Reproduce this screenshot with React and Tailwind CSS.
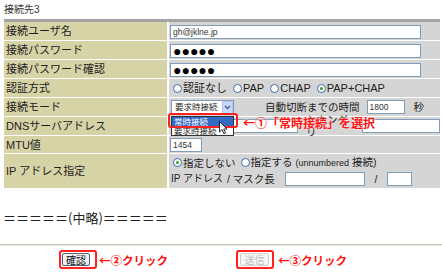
import React from "react";

function Row({ label, h, children }) {
  return (
    <div className={`flex gap-[2px] ${h}`}>
      <div className="w-[163px] shrink-0 bg-[#d6d3a7] flex items-center pl-[2px] text-[11px] leading-[12px] text-[#1e1e1e]">
        {label}
      </div>
      <div className="flex-1 bg-[#d5d5d5] flex items-center pl-px">{children}</div>
    </div>
  );
}

function Box({ className, children }) {
  return (
    <div
      className={`shrink-0 h-[14px] border border-[#7f9db9] bg-white flex items-center px-[2px] text-[8.5px] leading-[10px] text-[#333] ${className}`}
    >
      {children}
    </div>
  );
}

function Radio({ checked }) {
  return (
    <span className="inline-flex shrink-0 w-[9px] h-[9px] rounded-full border border-[#3b6aa8] bg-white items-center justify-center">
      {checked && <span className="w-[3px] h-[3px] rounded-full bg-[#29a329]" />}
    </span>
  );
}

function Opt({ checked, children }) {
  return (
    <span className="flex items-center gap-px">
      <Radio checked={checked} />
      <span>{children}</span>
    </span>
  );
}

export default function App() {
  return (
    <div className="relative w-[442px] h-[273px] overflow-hidden bg-white font-['Liberation_Sans','Noto_Sans_CJK_JP',sans-serif] text-[#1e1e1e]">
      <div className="h-[19px] pl-[4px] pt-[5px] text-[10px] leading-[10px] text-[#333]">接続先3</div>
      <div className="ml-[4px] w-[436px] h-[3px] bg-[#a3a3a3]" />
      <div className="ml-[4px] w-[436px] flex flex-col gap-px">
        <Row label="接続ユーザ名" h="h-[18px]">
          <Box className="w-[251px] mt-px">gh@jklne.jp</Box>
        </Row>
        <Row label="接続パスワード" h="h-[18px]">
          <Box className="w-[251px] mt-px">
            <span className="text-[14px] leading-[12px] text-black">●●●●●</span>
          </Box>
        </Row>
        <Row label="接続パスワード確認" h="h-[18px]">
          <Box className="w-[251px] mt-px">
            <span className="text-[14px] leading-[12px] text-black">●●●●●</span>
          </Box>
        </Row>
        <Row label="認証方式" h="h-[18px]">
          <div className="ml-[3px] flex items-center gap-[6px] text-[11px] leading-[12px] text-[#222]">
            <Opt>認証なし</Opt>
            <Opt>PAP</Opt>
            <Opt>CHAP</Opt>
            <Opt checked>PAP+CHAP</Opt>
          </div>
        </Row>
        <Row label="接続モード" h="h-[18px]">
          <div className="ml-px w-[63px] h-[15px] border border-[#7f9db9] bg-white flex items-center">
            <span className="flex-1 pl-[3px] text-[8.5px] leading-[10px] text-[#222]">要求時接続</span>
            <span className="w-[11px] h-[13px] bg-[#c6d6fc] border border-[#b3c6f2] rounded-[1px] flex items-center justify-center">
              <svg width="7" height="5" viewBox="0 0 7 5">
                <path d="M1 1 L3.5 3.5 L6 1" fill="none" stroke="#4a5f86" strokeWidth="1.4" />
              </svg>
            </span>
          </div>
          <span className="ml-[31px] text-[10.5px] leading-[12px] text-[#222]">自動切断までの時間</span>
          <Box className="ml-[7px] w-[38px]">1800</Box>
          <span className="ml-[9px] text-[10.5px] leading-[12px] text-[#222]">秒</span>
        </Row>
        <Row label="DNSサーバアドレス" h="h-[18px]">
          <Box className="ml-px w-[127px]"></Box>
          <span className="ml-[8px] text-[10.5px] leading-[12px] text-[#222]">セカンダリ</span>
          <Box className="ml-[4px] w-[78px]"></Box>
        </Row>
        <Row label="MTU値" h="h-[17px]">
          <Box className="w-[32px]">1454</Box>
        </Row>
        <Row label="IP アドレス指定" h="h-[34px]">
          <div className="flex flex-col gap-[3px] text-[10.5px] leading-[12px] text-[#222]">
            <div className="ml-[3px] flex items-center gap-[5px]">
              <Opt checked>指定しない</Opt>
              <span className="flex items-center gap-px">
                <Radio />
                <span>
                  指定する <span className="text-[9px]">(unnumbered</span> 接続)
                </span>
              </span>
            </div>
            <div className="flex items-center whitespace-nowrap">
              <span className="shrink-0 w-[57px] pl-px text-[10px]">IP アドレス</span>
              <span className="shrink-0 w-[58px] text-[10.5px]">/ マスク長</span>
              <Box className="w-[80px]"></Box>
              <span className="shrink-0 w-[22px] text-center">/</span>
              <Box className="w-[25px]"></Box>
            </div>
          </div>
        </Row>
      </div>

      <div className="mt-[24px] pl-[3px] text-[13px] leading-[12px] font-['Noto_Sans_CJK_JP',sans-serif] text-[#222]">
        ＝＝＝＝＝(中略)＝＝＝＝＝
      </div>

      <div className="mt-[20px] h-[2px] border-t border-[#c4c1b8] bg-[#ebe9e3]" />

      <div className="mt-[4px] flex items-center pl-[59px] font-['Noto_Sans_CJK_JP',sans-serif]">
        <div className="w-[177px] flex items-center">
          <div className="w-[38px] h-[19px] border-[2.5px] border-[#ff2020] rounded-[3px] flex items-center pl-px">
            <div className="w-[28px] h-[13px] border border-[#4f5f78] rounded-[2px] bg-[#eef0f4] flex items-center justify-center text-[10px] leading-[10px] text-[#111]">
              確認
            </div>
          </div>
          <span className="ml-[2px] text-[11.5px] leading-[14px] font-bold text-[#ff1010]">←②クリック</span>
        </div>
        <div className="w-[38px] h-[19px] border-[2.5px] border-[#ff2020] rounded-[3px] flex items-center pl-[2px]">
          <div className="w-[29px] h-[13px] border border-[#cfcfcf] rounded-[2px] bg-[#f6f6f6] flex items-center justify-center text-[10px] leading-[10px] text-[#bdbdbd]">
            送信
          </div>
        </div>
        <span className="ml-[4px] text-[11.5px] leading-[14px] font-bold text-[#ff1010]">←③クリック</span>
      </div>

      {/* open dropdown list overlay */}
      <div className="absolute left-[171px] top-[116px] w-[63px] h-[20px] border border-[#333] bg-white flex flex-col text-[8.5px] leading-[9px] font-['Noto_Sans_CJK_JP',sans-serif]">
        <div className="h-[9px] bg-[#316ac5] text-white pl-[2px]">常時接続</div>
        <div className="h-[9px] text-[#222] pl-[2px]">要求時接続</div>
      </div>
      {/* red highlight box */}
      <div className="absolute left-[168px] top-[113px] w-[70px] h-[15px] border-[2.5px] border-[#ff2020] rounded-[3px]" />
      {/* cursor */}
      <svg className="absolute left-[219px] top-[121px]" width="10" height="14" viewBox="0 0 10 14">
        <path d="M0.5 0.5 L0.5 11 L3 8.6 L5 12.8 L6.6 12 L4.7 8 L8 8 Z" fill="white" stroke="#111" strokeWidth="0.9" />
      </svg>
      {/* annotation */}
      <div className="absolute left-[243px] top-[116px] text-[12px] leading-[14px] font-bold text-[#ff1010] font-['Noto_Sans_CJK_JP',sans-serif] [text-shadow:0_0_2px_white,0_0_2px_white]">
        ←①「常時接続」を選択
      </div>
    </div>
  );
}
